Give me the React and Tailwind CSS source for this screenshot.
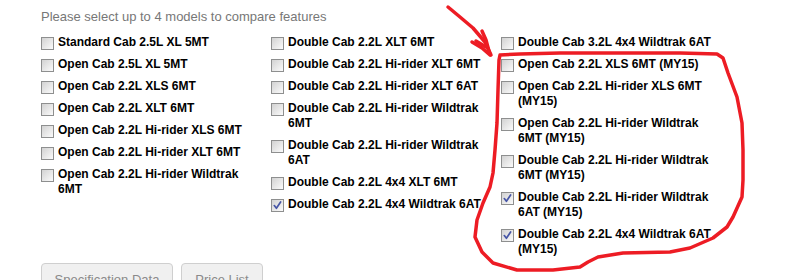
import React from "react";

const columns = [
  [
    ["Standard Cab 2.5L XL 5MT", false],
    ["Open Cab 2.5L XL 5MT", false],
    ["Open Cab 2.2L XLS 6MT", false],
    ["Open Cab 2.2L XLT 6MT", false],
    ["Open Cab 2.2L Hi-rider XLS 6MT", false],
    ["Open Cab 2.2L Hi-rider XLT 6MT", false],
    ["Open Cab 2.2L Hi-rider Wildtrak 6MT", false],
  ],
  [
    ["Double Cab 2.2L XLT 6MT", false],
    ["Double Cab 2.2L Hi-rider XLT 6MT", false],
    ["Double Cab 2.2L Hi-rider XLT 6AT", false],
    ["Double Cab 2.2L Hi-rider Wildtrak 6MT", false],
    ["Double Cab 2.2L Hi-rider Wildtrak 6AT", false],
    ["Double Cab 2.2L 4x4 XLT 6MT", false],
    ["Double Cab 2.2L 4x4 Wildtrak 6AT", true],
  ],
  [
    ["Double Cab 3.2L 4x4 Wildtrak 6AT", false],
    ["Open Cab 2.2L XLS 6MT (MY15)", false],
    ["Open Cab 2.2L Hi-rider XLS 6MT (MY15)", false],
    ["Open Cab 2.2L Hi-rider Wildtrak 6MT (MY15)", false],
    ["Double Cab 2.2L Hi-rider Wildtrak 6MT (MY15)", false],
    ["Double Cab 2.2L Hi-rider Wildtrak 6AT (MY15)", true],
    ["Double Cab 2.2L 4x4 Wildtrak 6AT (MY15)", true],
  ],
];

function Box({ checked }) {
  return (
    <span className="mt-[2px] flex h-[13px] w-[13px] shrink-0 items-center justify-center border border-[#8e8f8f] bg-linear-to-br from-[#d2d2d2] to-[#fbfbfb]">
      {checked && (
        <svg width="9" height="9" viewBox="0 0 9 9">
          <path
            d="M1.3 4.6 L3.4 7.3 L7.6 1"
            fill="none"
            stroke="#4756a6"
            strokeWidth="1.7"
            strokeLinecap="round"
            strokeLinejoin="round"
          />
        </svg>
      )}
    </span>
  );
}

const loop =
  "500,55 520,54 560,53 620,53 680,53 717,54 723,58 728,73 737,97 742,123 743,150 743,180 742,197 733,217 727,227 713,238 690,248 670,252 623,253 598,257 588,262 580,267 553,270 517,270 493,263 482,252 475,237 477,220 483,203 490,187 493,173 495,150 497,123 498,90 499,60 500,55";

export default function App() {
  return (
    <div className="relative h-[280px] w-[790px] overflow-hidden bg-white pl-[41px] pt-[9px] font-['Liberation_Sans',Arial,sans-serif]">
      <p className="text-[13px] leading-[16px] text-[#777777]">
        Please select up to 4 models to compare features
      </p>
      <div className="mt-[10px] flex">
        {columns.map((col, i) => (
          <div key={i} className="flex w-[230px] flex-col gap-[7px]">
            {col.map(([label, checked]) => (
              <label key={label} className="flex items-start">
                <Box checked={checked} />
                <span className="ml-[4px] w-[205px] text-[12px] font-bold leading-[15px] text-black">
                  {label}
                </span>
              </label>
            ))}
          </div>
        ))}
      </div>
      <div className="mt-[6px] flex gap-[8px]">
        <button className="h-[34px] w-[132px] rounded-[4px] border border-[#cfcfcf] bg-[#f0f0f0] text-[13px] text-[#8a8a8a]">
          Specification Data
        </button>
        <button className="h-[34px] w-[82px] rounded-[4px] border border-[#cfcfcf] bg-[#f0f0f0] text-[13px] text-[#8a8a8a]">
          Price List
        </button>
      </div>
      <svg
        className="pointer-events-none absolute left-0 top-0"
        width="790"
        height="280"
        viewBox="0 0 790 280"
      >
        <g fill="none" stroke="#ed1c24" strokeWidth="3.5" strokeLinecap="round" strokeLinejoin="round">
          <polyline points="448,7 460,17 473,28 485,42 491,55" />
          <polyline points="472,42 482,48 490,55 486,40 482,31" />
          <polyline points="476,41 486,47" />
          <polyline points={loop} />
        </g>
      </svg>
    </div>
  );
}
